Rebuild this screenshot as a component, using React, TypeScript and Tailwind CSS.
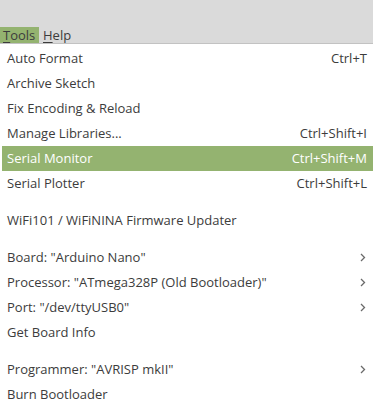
import React from "react";

type Item =
  | { kind: "sep" }
  | { kind: "item"; label: string; shortcut?: string; sub?: boolean; active?: boolean };

const items: Item[] = [
  { kind: "item", label: "Auto Format", shortcut: "Ctrl+T" },
  { kind: "item", label: "Archive Sketch" },
  { kind: "item", label: "Fix Encoding & Reload" },
  { kind: "item", label: "Manage Libraries...", shortcut: "Ctrl+Shift+I" },
  { kind: "item", label: "Serial Monitor", shortcut: "Ctrl+Shift+M", active: true },
  { kind: "item", label: "Serial Plotter", shortcut: "Ctrl+Shift+L" },
  { kind: "sep" },
  { kind: "item", label: "WiFi101 / WiFiNINA Firmware Updater" },
  { kind: "sep" },
  { kind: "item", label: 'Board: "Arduino Nano"', sub: true },
  { kind: "item", label: 'Processor: "ATmega328P (Old Bootloader)"', sub: true },
  { kind: "item", label: 'Port: "/dev/ttyUSB0"', sub: true },
  { kind: "item", label: "Get Board Info" },
  { kind: "sep" },
  { kind: "item", label: 'Programmer: "AVRISP mkII"', sub: true },
  { kind: "item", label: "Burn Bootloader" },
];

const Chevron = () => (
  <svg width="6" height="9" viewBox="0 0 6 9" className="text-[#6a6a6a]">
    <path d="M1 1 L4.5 4.5 L1 8" fill="none" stroke="currentColor" strokeWidth="1.3" />
  </svg>
);

export default function App() {
  return (
    <div
      className="w-[373px] h-[409px] overflow-hidden bg-white text-[13px] text-[#3c3c3c]"
      style={{ fontFamily: '"Open Sans", "Noto Sans", sans-serif' }}
    >
      {/* menu bar */}
      <div className="h-[44px] bg-[#dadada] border-b border-[#c2c2c2] flex items-end">
        <div className="h-[16px] w-[39px] bg-[#94b370] flex items-center pl-[3px] leading-none">
          <span className="underline underline-offset-2">T</span>ools
        </div>
        <div className="h-[16px] flex items-center pl-[4px] leading-none">
          <span className="underline underline-offset-2">H</span>elp
        </div>
      </div>

      {/* dropdown */}
      <div className="pt-[2px] pl-[2px]">
        {items.map((it, i) =>
          it.kind === "sep" ? (
            <div key={i} className="h-[12px]" />
          ) : (
            <div
              key={i}
              className={`h-[25px] flex items-center justify-between pl-[5px] pr-[6px] ${
                it.active ? "bg-[#94b370] text-white" : ""
              }`}
            >
              <span className="whitespace-nowrap">{it.label}</span>
              {it.shortcut && <span className="whitespace-nowrap">{it.shortcut}</span>}
              {it.sub && (
                <span className="pr-[1px] flex items-center">
                  <Chevron />
                </span>
              )}
            </div>
          )
        )}
      </div>
    </div>
  );
}
